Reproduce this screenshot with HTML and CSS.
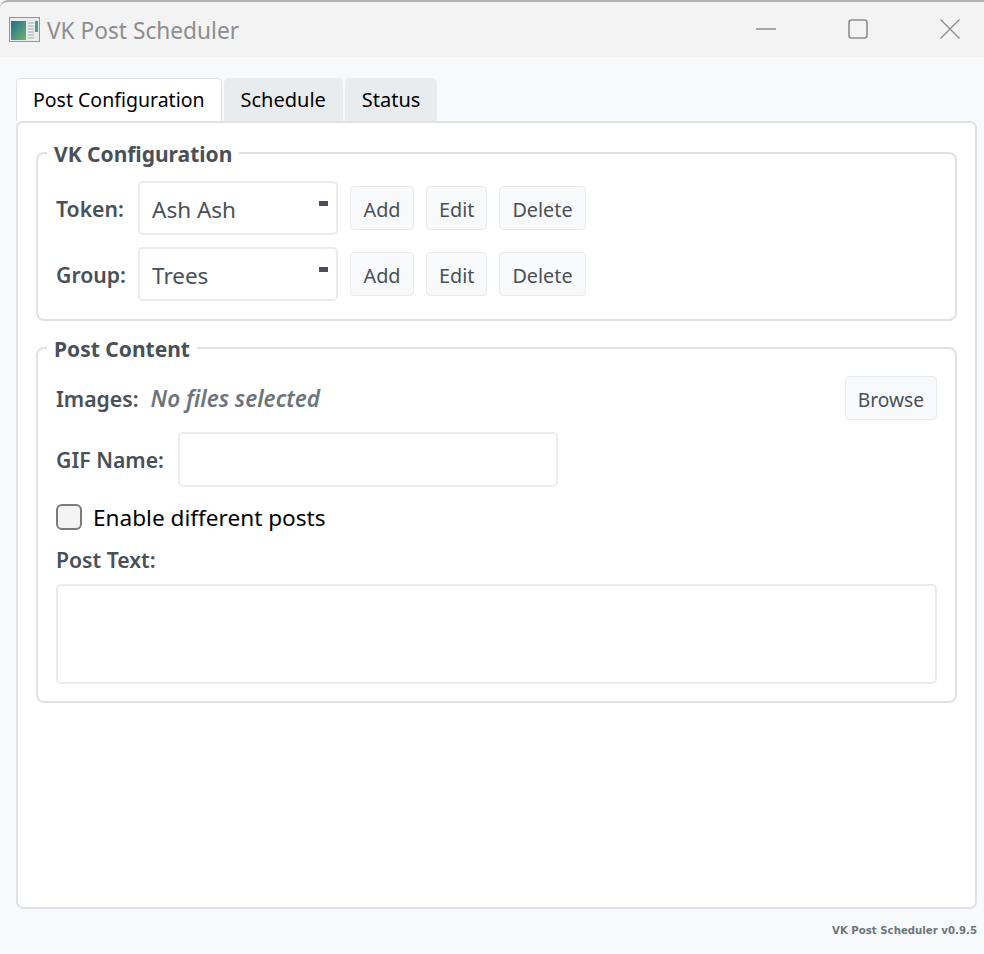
FILE: index.html
```html
<!DOCTYPE html>
<html lang="en">
<head>
    <meta charset="UTF-8">
    <meta name="viewport" content="width=device-width, initial-scale=1.0">
    <title>VK Post Scheduler</title>
    <link rel="stylesheet" href="styles.css">
</head>
<body>
    <header class="titlebar">
        <svg class="app-icon" width="32" height="26" viewBox="0 0 32 26">
            <defs>
                <linearGradient id="pane" x1="0" y1="0" x2="1" y2="1">
                    <stop offset="0" stop-color="#1f6f8f"/>
                    <stop offset="1" stop-color="#6fb56a"/>
                </linearGradient>
            </defs>
            <rect x="0.5" y="0.5" width="30" height="24" fill="#e8ecec" stroke="#8d9698"/>
            <rect x="2" y="4" width="15" height="19" fill="url(#pane)"/>
            <path d="M19 6h6M19 9h6M19 12h6M19 15h6M19 18h6M19 21h6" stroke="#a9aeb0" stroke-width="1.2"/>
            <rect x="26" y="4" width="3" height="11" fill="#4f9a86"/>
        </svg>
        <span class="app-title">VK Post Scheduler</span>
        <div class="window-buttons">
            <svg width="20" height="20" viewBox="0 0 20 20"><path d="M0 10h20" stroke="#8f8f8f" stroke-width="1.5"/></svg>
            <svg width="20" height="20" viewBox="0 0 20 20"><rect x="1" y="1" width="18" height="18" rx="2.5" fill="none" stroke="#8f8f8f" stroke-width="1.6"/></svg>
            <svg width="20" height="20" viewBox="0 0 20 20"><path d="M0.5 0.5l19 19M19.5 0.5l-19 19" stroke="#8f8f8f" stroke-width="1.4"/></svg>
        </div>
    </header>

    <main class="content">
        <nav class="tabs">
            <div class="tab tab-active">Post Configuration</div>
            <div class="tab">Schedule</div>
            <div class="tab">Status</div>
        </nav>

        <section class="panel">
            <fieldset class="group-box config-box">
                <legend>VK Configuration</legend>
                <div class="row">
                    <label class="field-label label-narrow">Token:</label>
                    <div class="select">Ash Ash<span class="select-arrow"></span></div>
                    <button class="btn btn-add">Add</button>
                    <button class="btn">Edit</button>
                    <button class="btn">Delete</button>
                </div>
                <div class="row">
                    <label class="field-label label-narrow">Group:</label>
                    <div class="select">Trees<span class="select-arrow"></span></div>
                    <button class="btn btn-add">Add</button>
                    <button class="btn">Edit</button>
                    <button class="btn">Delete</button>
                </div>
            </fieldset>

            <fieldset class="group-box content-box">
                <legend>Post Content</legend>
                <div class="row images-row">
                    <label class="field-label">Images:</label>
                    <span class="no-files">No files selected</span>
                    <button class="btn btn-browse">Browse</button>
                </div>
                <div class="row gif-row">
                    <label class="field-label">GIF Name:</label>
                    <div class="text-input"></div>
                </div>
                <div class="check-row">
                    <span class="checkbox"></span>
                    <span class="check-text">Enable different posts</span>
                </div>
                <label class="field-label post-label">Post Text:</label>
                <div class="text-area"></div>
            </fieldset>
        </section>

        <footer class="version">VK Post Scheduler v0.9.5</footer>
    </main>
</body>
</html>
```

FILE: styles.css
```css
body {
    font-family: "Noto Sans", "Open Sans", sans-serif;
    margin: 0;
    padding: 0;
    height: 954px;
    overflow: hidden;
    display: flex;
    flex-direction: column;
    background-color: #f8f9fa;
    color: #495057;
}

.titlebar {
    display: flex;
    align-items: center;
    height: 55px;
    flex-shrink: 0;
    padding-left: 9px;
    background-color: #f3f3f3;
    border-top: 2px solid #b0b3b6;
    border-top-left-radius: 8px;
}

.app-icon {
    margin-right: 6px;
}

.app-title {
    font-size: 22.7px;
    color: #8e8e8e;
    margin-top: 2px;
}

.window-buttons {
    display: flex;
    margin-left: auto;
    margin-right: 24px;
    margin-top: -1px;
    gap: 72px;
}

.content {
    flex: 1;
    display: flex;
    flex-direction: column;
    padding: 21px 7px 0 16px;
    min-height: 0;
}

.tabs {
    display: flex;
    gap: 2px;
    height: 43px;
    flex-shrink: 0;
}

.tab {
    display: flex;
    align-items: center;
    padding: 0 16px 1px 16px;
    font-size: 20px;
    color: #000;
    background-color: #e9ecef;
    border: 1px solid #e9ecef;
    border-bottom: none;
    border-radius: 5px 5px 0 0;
}

.tab-active {
    font-size: 19.5px;
    background-color: #fff;
    border-color: #dee2e6;
}

.panel {
    height: 788px;
    box-sizing: border-box;
    background-color: #fff;
    border: 2px solid #dee2e6;
    border-radius: 7px;
    padding: 14px 18px 0 18px;
    flex-shrink: 0;
}

.group-box {
    margin: 0 0 11px 0;
    padding: 0 18px;
    border: 2px solid #dee2e6;
    border-radius: 8px;
    min-width: 0;
}

.group-box legend {
    font-size: 21px;
    font-weight: 700;
    color: #495057;
    padding: 3px 7px 0 7px;
    margin-left: -9px;
    line-height: 28px;
}

.config-box {
    padding-top: 13px;
    padding-bottom: 18px;
}

.content-box {
    padding-top: 13px;
    padding-bottom: 17px;
}

.row {
    display: flex;
    align-items: center;
    gap: 12px;
}

.config-box .row {
    height: 54px;
}

.config-box .row + .row {
    margin-top: 12px;
}

.field-label {
    font-size: 21.2px;
    font-weight: 600;
    color: #495057;
}

.label-narrow {
    width: 70px;
}

.select {
    position: relative;
    box-sizing: border-box;
    width: 200px;
    height: 54px;
    display: flex;
    align-items: center;
    padding: 2px 0 0 12px;
    font-size: 22.5px;
    color: #495057;
    background-color: #fff;
    border: 2px solid #e9ecef;
    border-radius: 5px;
}

.select-arrow {
    position: absolute;
    top: 18px;
    right: 8px;
    width: 9px;
    height: 5px;
    background-color: #495057;
}

.btn {
    font-family: inherit;
    font-size: 19.8px;
    color: #495057;
    height: 44px;
    padding: 2px 12px 0 12px;
    background-color: #f8f9fa;
    border: 1px solid #e9ecef;
    border-radius: 4px;
}

.btn-add {
    min-width: 64px;
}

.images-row {
    height: 44px;
}

.no-files {
    font-size: 22.5px;
    font-style: italic;
    font-weight: 600;
    color: #6c757d;
}

.btn-browse {
    font-size: 19.2px;
    margin-left: auto;
}

.gif-row {
    margin-top: 12px;
    gap: 14px;
}

.text-input {
    box-sizing: border-box;
    width: 380px;
    height: 55px;
    background-color: #fff;
    border: 2px solid #e9ecef;
    border-radius: 5px;
}

.check-row {
    display: flex;
    align-items: center;
    gap: 11px;
    margin-top: 13px;
    height: 34px;
}

.checkbox {
    box-sizing: border-box;
    width: 26px;
    height: 26px;
    background-color: #f3f3f3;
    border: 2px solid #7a7a7a;
    border-radius: 6px;
}

.check-text {
    font-size: 22.6px;
    color: #000;
}

.post-label {
    display: block;
    margin-top: 12px;
    line-height: 28px;
}

.text-area {
    box-sizing: border-box;
    height: 100px;
    margin-top: 10px;
    background-color: #fff;
    border: 2px solid #e9ecef;
    border-radius: 5px;
}

.version {
    text-align: right;
    font-family: "DejaVu Sans", sans-serif;
    font-size: 10.2px;
    font-weight: 700;
    color: #6c757d;
    margin-top: 16px;
}
```
